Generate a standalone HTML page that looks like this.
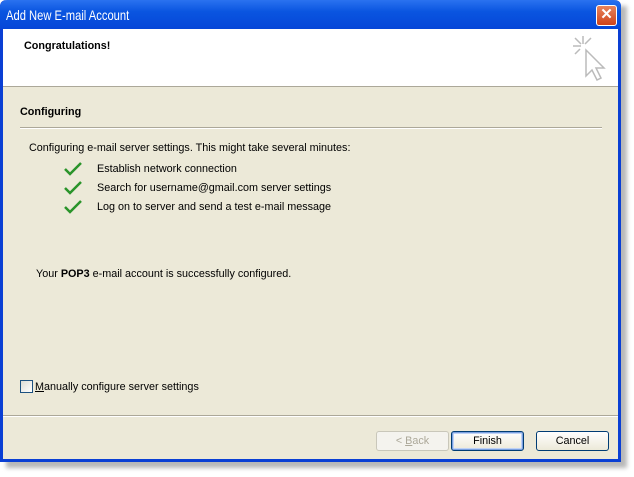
<!DOCTYPE html>
<html><head><style>
body{margin:0;width:634px;height:477px;background:#fff;position:relative;font-family:"Liberation Sans",Arial,sans-serif;font-size:10.8px;color:#000;overflow:hidden}
.shadow{position:absolute;left:6px;top:6px;width:621px;height:462px;background:#b8b8b8;filter:blur(2px)}
.win{position:absolute;left:0;top:0;width:615px;height:459px;border:3px solid #0a3fd4;border-top:none;background:#ece9d8;border-radius:6px 6px 0 0}
.title{position:absolute;left:-3px;top:0;width:621px;height:29px;background:linear-gradient(#2a72f0,#0a55e0 40%,#0546d8);border-radius:7px 7px 0 0;color:#fff;font-size:14px;line-height:31px}
.title span{position:absolute;left:6px;transform:scaleX(0.8);transform-origin:left}
.close{position:absolute;right:4px;top:5px;width:19px;height:19px;background:linear-gradient(#e8845c,#d0431a);border:1px solid #fff;border-radius:3px;color:#fff;font-size:15px;line-height:18px;text-align:center;font-weight:bold}
.hdr{position:absolute;left:0;top:29px;width:615px;height:57px;background:#fff;border-bottom:1px solid #aca899}
.b{font-weight:bold}
.t{position:absolute;white-space:nowrap}
.btn{position:absolute;top:431px;height:18px;width:71px;border:1px solid #003c74;border-radius:3px;background:linear-gradient(#fff,#ece9d8);text-align:center;line-height:18px}
</style></head><body>
<div class="shadow"></div>
<div class="win">
<div class="title"><span>Add New E-mail Account</span><div class="close">✕</div></div>
<div class="hdr"></div>
</div>
<div class="t b" style="left:24px;top:40px">Congratulations!</div>
<svg style="position:absolute;left:570px;top:34px" width="40" height="50" viewBox="0 0 40 50" fill="none" stroke="#bbb" stroke-width="1.5">
<path d="M13 2v8M3 12h8M5 4l6 6M21 4l-6 6M5 20l5-5"/>
<path d="M16 16v26l6-6 5 10 4-2-5-10h8z" fill="#fff"/>
</svg>
<div class="t b" style="left:20px;top:106px">Configuring</div>
<div style="position:absolute;left:20px;top:127px;width:582px;border-top:1px solid #aca899;border-bottom:1px solid #fff"></div>
<div class="t" style="left:29px;top:142px">Configuring e-mail server settings. This might take several minutes:</div>
<svg style="position:absolute;left:63px;top:160px" width="20" height="60" viewBox="0 0 20 60" fill="none" stroke="#2a942a" stroke-width="2.5"><path d="M2 9l5 5 11-11M2 28l5 5 11-11M2 47l5 5 11-11"/></svg>
<div class="t" style="left:97px;top:163px">Establish network connection</div>
<div class="t" style="left:97px;top:182px">Search for username@gmail.com server settings</div>
<div class="t" style="left:97px;top:201px">Log on to server and send a test e-mail message</div>
<div class="t" style="left:36px;top:268px">Your <b>POP3</b> e-mail account is successfully configured.</div>
<div style="position:absolute;left:20px;top:380px;width:11px;height:11px;border:1px solid #1c5180;background:linear-gradient(135deg,#dcdcd4,#fff)"></div>
<div class="t" style="left:35px;top:381px"><u>M</u>anually configure server settings</div>
<div style="position:absolute;left:3px;top:415px;width:615px;border-top:1px solid #aca899;border-bottom:1px solid #fff"></div>
<div class="btn" style="left:376px;border-color:#c9c7ba;color:#aca899;background:#f4f3ee">&lt; <u>B</u>ack</div>
<div class="btn" style="left:451px;box-shadow:inset 0 0 0 1px #7aa0e0,inset 0 0 0 2px #c0d3f5">Finish</div>
<div class="btn" style="left:536px">Cancel</div>
</body></html>
